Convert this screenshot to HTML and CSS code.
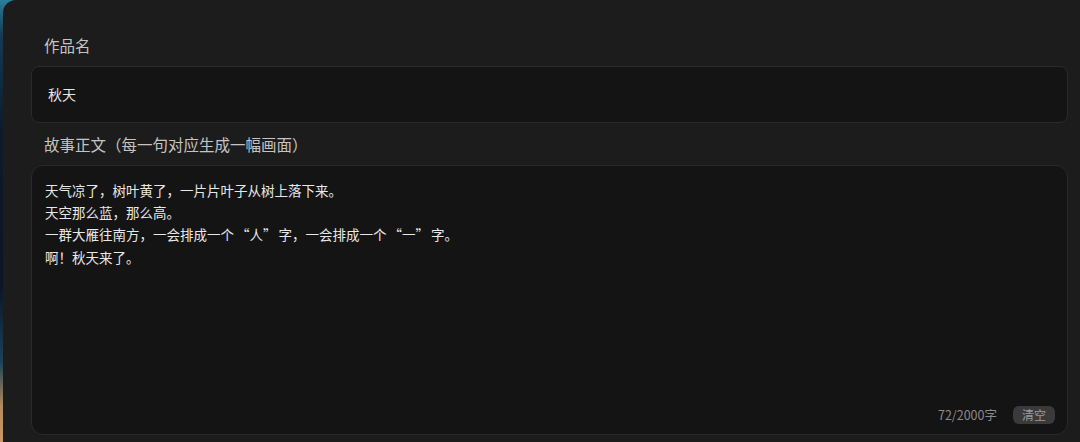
FILE: index.html
```html
<!DOCTYPE html>
<html lang="zh-CN">
<head>
<meta charset="utf-8">
<title>作品</title>
<link rel="stylesheet" href="styles.css">
</head>
<body>
<div class="stage">
  <div class="panel">
    <div class="field-label">作品名</div>
    <div class="input">秋天</div>
    <div class="field-label">故事正文（每一句对应生成一幅画面）</div>
    <div class="textarea">
      <div class="story">
        <p>天气凉了，树叶黄了，一片片叶子从树上落下来。</p>
        <p>天空那么蓝，那么高。</p>
        <p>一群大雁往南方，一会排成一个<span class="qo">“</span>人<span class="qc">”</span>字，一会排成一个<span class="qo">“</span>一<span class="qc">”</span>字。</p>
        <p>啊！秋天来了。</p>
      </div>
      <div class="footer">
        <span class="count">72/2000字</span>
        <span class="clear-btn">清空</span>
      </div>
    </div>
  </div>
</div>
</body>
</html>
```
FILE: styles.css
```css
html, body {
  margin: 0;
  padding: 0;
  height: 100%;
  overflow: hidden;
}
body {
  background: linear-gradient(180deg, #2a7f98 0%, #163a52 8%, #0c1a2a 30%, #0b1626 65%, #1c4258 82%, #b48a5e 92%, #c89a68 100%);
  font-family: "Noto Sans CJK SC", "Noto Sans", sans-serif;
}
.stage {
  display: flex;
  height: 100%;
  padding-left: 3px;
  box-sizing: border-box;
}
.panel {
  flex: 1;
  background: #1c1c1c;
  border-radius: 13px 0 0 0;
  padding: 34px 12px 0 28px;
  display: flex;
  flex-direction: column;
}
.field-label {
  color: #c4c4c4;
  font-size: 15.5px;
  line-height: 22px;
  padding-left: 13px;
  margin-bottom: 10px;
}
.input {
  background: #141414;
  border: 1px solid #2a2a2a;
  border-radius: 8px;
  height: 55px;
  box-sizing: content-box;
  padding-left: 16px;
  color: #e6e6e6;
  font-size: 14px;
  line-height: 55px;
  margin-bottom: 10px;
}
.textarea {
  background: #141414;
  border: 1px solid #2a2a2a;
  border-radius: 12px;
  display: flex;
  flex-direction: column;
  padding: 13px 12px 10px 13px;
  box-sizing: border-box;
  height: 270px;
}
.story {
  flex: 1;
  color: #e8e8e8;
  font-size: 13.5px;
  line-height: 22.2px;
}
.story p {
  margin: 0;
}
.qo {
  padding-left: 2px;
}
.qc {
  padding-right: 2px;
}
.footer {
  display: flex;
  justify-content: flex-end;
  align-items: center;
  gap: 16px;
}
.count {
  color: #8a8a8a;
  font-size: 12.5px;
}
.clear-btn {
  background: #3a3a3a;
  color: #9a9a9a;
  font-size: 12px;
  border-radius: 6px;
  width: 42px;
  height: 18px;
  line-height: 18px;
  text-align: center;
}
```
